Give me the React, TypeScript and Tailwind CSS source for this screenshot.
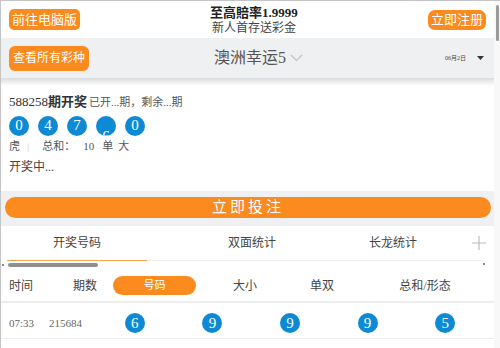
import React from 'react'

const ORANGE = 'bg-[#fb8a1f]'

const topBalls = ['0', '4', '7', '6', '0']
const rowBalls = ['6', '9', '9', '9', '5']

function Ball({ n, sunk = false, size = 'top' }: { n: string; sunk?: boolean; size?: 'top' | 'row' }) {
  if (size === 'row') {
    return (
      <div className="flex size-[20px] items-center justify-center rounded-full bg-[#0e8ad5] text-[15px] leading-none text-white">
        {n}
      </div>
    )
  }
  return (
    <div className="flex size-[20px] justify-center overflow-hidden rounded-full bg-[#0e8ad5] text-[15px] leading-none text-white">
      <span className={sunk ? 'pt-[13px]' : 'pt-[2px]'}>{n}</span>
    </div>
  )
}

function Header() {
  return (
    <div className="flex h-[37px] items-center justify-between bg-white pl-2 pr-2">
      <button className={`flex h-[21px] items-center rounded-[5px] ${ORANGE} px-[3px] text-[13px] leading-none text-white`}>
        前往电脑版
      </button>
      <div className="flex flex-col items-center leading-none">
        <span className="text-[13px] font-bold text-[#222]">至高賠率1.9999</span>
        <span className="mt-[3px] text-[12px] text-[#444]">新人首存送彩金</span>
      </div>
      <button className={`flex h-[20px] items-center rounded-[7px] ${ORANGE} px-[3px] text-[13px] leading-none text-white`}>
        立即注册
      </button>
    </div>
  )
}

function LotteryBar() {
  return (
    <>
      <div className="grid h-[40px] grid-cols-[1fr_auto_1fr] items-center bg-[#eff0f1] px-2">
        <div>
          <button className={`flex h-[25px] items-center rounded-[6px] ${ORANGE} px-[4px] text-[12px] leading-none text-white`}>
            查看所有彩种
          </button>
        </div>
        <div className="ml-[22px] flex items-center gap-[4px] text-[16px] text-[#555]">
          <span>澳洲幸运5</span>
          <svg width="13" height="8" viewBox="0 0 13 8" fill="none">
            <path d="M1 1l5.5 5.5L12 1" stroke="#c2c2c2" strokeWidth="1.2" />
          </svg>
        </div>
        <div className="flex items-center justify-end gap-[11px] pr-[2px]">
          <span className="text-[6px] text-[#444]">06月2日</span>
          <svg width="7" height="4" viewBox="0 0 7 4">
            <path d="M0 0h7L3.5 4z" fill="#333" />
          </svg>
        </div>
      </div>
      <div className="h-[8px] bg-gradient-to-b from-[#d9dcdf] to-white" />
    </>
  )
}

function Draw() {
  return (
    <div className="h-[105px] bg-white px-2 pt-[9px]">
      <div className="flex items-baseline leading-none text-[#333]">
        <span className="text-[13px]">588258</span>
        <span className="text-[13px] font-bold">期开奖</span>
        <span className="ml-[2px] text-[11px] text-[#555]">已开...期，剩余...期</span>
      </div>
      <div className="mt-[8px] flex gap-[9px]">
        {topBalls.map((n, i) => (
          <Ball key={i} n={n} sunk={i === 3} />
        ))}
      </div>
      <div className="mt-[5px] flex items-center text-[11px] leading-none text-[#555]">
        <span>虎</span>
        <span className="ml-[7px] text-[#ccc]">|</span>
        <span className="ml-[13px]">总和：</span>
        <span className="ml-[8px]">10</span>
        <span className="ml-[8px]">单</span>
        <span className="ml-[5px]">大</span>
      </div>
      <div className="mt-[9px] text-[12px] leading-none text-[#444]">开奖中...</div>
    </div>
  )
}

function BetBar() {
  return (
    <div className="bg-[#eff0f1] pb-[8px] pl-[4px] pr-[3px] pt-[6px]">
      <button className={`flex h-[21px] w-full items-center justify-center rounded-full ${ORANGE} text-[15px] leading-none tracking-[3px] text-white`}>
        立即投注
      </button>
    </div>
  )
}

function Tabs() {
  return (
    <div className="bg-white">
      <div className="flex h-[34px] items-center text-[12px] text-[#444]">
        <div className="ml-[6px] w-[140px] text-center">开奖号码</div>
        <div className="w-[210px] text-center">双面统计</div>
        <div className="w-[72px] text-center">长龙统计</div>
        <div className="ml-auto mr-[7px] flex items-center">
          <svg width="16" height="16" viewBox="0 0 16 16">
            <path d="M8 1v14M1 8h14" stroke="#bcbcbc" strokeWidth="1.2" />
          </svg>
        </div>
      </div>
      <div className="flex h-[1px]">
        <div className="ml-[6px] w-[140px] bg-[#f7a54d]" />
        <div className="mr-[10px] flex-1 bg-[#ececec]" />
      </div>
      <div className="flex h-[9px] items-start pt-[2px]">
        <div className="ml-[1px] mt-[1px] size-[2px] bg-[#888]" />
        <div className="ml-[4px] h-[4px] w-[90px] rounded-full bg-[#8f8f8f]" />
        <div className="ml-auto mr-[9px] size-[2px] bg-[#888]" />
      </div>
    </div>
  )
}

function Table() {
  return (
    <div className="bg-white">
      <div className="flex h-[33px] items-center border-b-2 border-[#eeeeee] text-[12px] text-[#444]">
        <div className="w-[56px] pl-2">时间</div>
        <div className="w-[56px] text-center">期数</div>
        <div className={`flex h-[19px] w-[83px] items-center justify-center rounded-full ${ORANGE} text-[11px] text-white`}>
          号码
        </div>
        <div className="w-[98px] text-center">大小</div>
        <div className="w-[56px] text-center">单双</div>
        <div className="flex-1 pl-[6px] text-center">总和/形态</div>
      </div>
      {[0, 1].map((r) => (
        <div key={r} className="flex h-[36px] items-center border-b border-[#eeeeee] pt-[5px]">
          <div className="w-[48px] pl-2 text-[11px] text-[#666]">07:33</div>
          <div className="w-[47px] text-[11px] text-[#666]">215684</div>
          <div className="grid w-[388px] grid-cols-5 justify-items-center">
            {rowBalls.map((n, i) => (
              <Ball key={i} n={n} size="row" />
            ))}
          </div>
        </div>
      ))}
    </div>
  )
}

export default function App() {
  return (
    <div className="flex h-[348px] w-[500px] overflow-hidden border-l border-t border-[#c4c4c4] bg-white font-['Liberation_Serif','Noto_Sans_CJK_SC',serif] text-[#333]">
      <div className="min-w-0 flex-1">
        <Header />
        <LotteryBar />
        <Draw />
        <BetBar />
        <Tabs />
        <Table />
      </div>
      <div className="relative w-[6px] bg-[#f8f8f8]">
        <div className="absolute left-[2px] top-[4px] h-[36px] w-[3px] rounded-full bg-[#9a9a9a]" />
      </div>
    </div>
  )
}
